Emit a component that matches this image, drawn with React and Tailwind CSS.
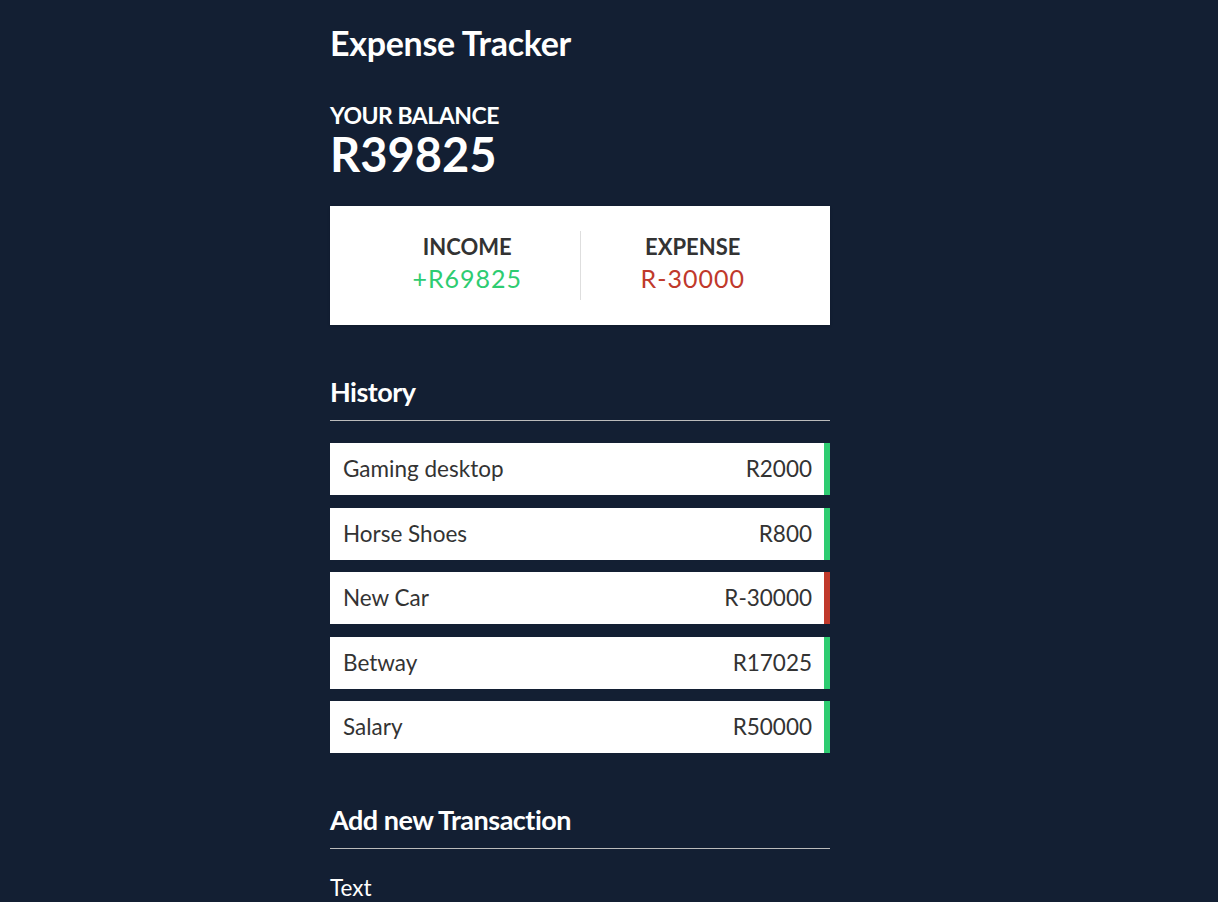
import React from "react";

const TRANSACTIONS = [
  { text: "Gaming desktop", amount: "R2000", plus: true },
  { text: "Horse Shoes", amount: "R800", plus: true },
  { text: "New Car", amount: "R-30000", plus: false },
  { text: "Betway", amount: "R17025", plus: true },
  { text: "Salary", amount: "R50000", plus: true },
];

export default function App() {
  return (
    <div
      className="min-h-screen bg-[#131f33] text-white"
      style={{ fontFamily: "Lato, 'Open Sans', sans-serif" }}
    >
      <div className="w-[500px] ml-[330px] pt-[24px]">
        <h2 className="text-[34px] font-bold tracking-[-0.3px] leading-[38px]">
          Expense Tracker
        </h2>

        <h4 className="mt-[41px] text-[23px] font-bold uppercase tracking-[-0.5px] leading-[24px]">
          Your Balance
        </h4>
        <h1 className="mt-[1px] text-[47px] font-bold leading-[52px]">R39825</h1>

        {/* income / expense box */}
        <div className="mt-[26px] bg-white h-[119px] px-[25px] flex items-center justify-center shadow">
          <div className="flex-1 text-center border-r border-[#dedede] pt-[1px] pb-[6px]">
            <h4 className="text-[22px] font-bold text-[#333] uppercase leading-[30px]">
              Income
            </h4>
            <p className="text-[25px] tracking-[1px] text-[#2ecc71] leading-[32px]">
              +R69825
            </p>
          </div>
          <div className="flex-1 text-center pt-[1px] pb-[6px]">
            <h4 className="text-[22px] font-bold text-[#333] uppercase leading-[30px]">
              Expense
            </h4>
            <p className="text-[25px] tracking-[1px] text-[#c0392b] leading-[32px]">
              R-30000
            </p>
          </div>
        </div>

        <h3 className="mt-[51px] text-[27px] font-bold tracking-[-0.5px] leading-[32px] pb-[12px] border-b border-[#bbb]">
          History
        </h3>
        <ul className="mt-[22px] flex flex-col gap-[12.5px]">
          {TRANSACTIONS.map((t) => (
            <li
              key={t.text}
              className={`bg-white text-[#333] h-[52px] flex items-center justify-between pl-[13px] pr-[12px] text-[22.5px] border-r-[6px] ${
                t.plus ? "border-[#2ecc71]" : "border-[#c0392b]"
              }`}
            >
              <span>{t.text}</span>
              <span>{t.amount}</span>
            </li>
          ))}
        </ul>

        <h3 className="mt-[51px] text-[27px] font-bold tracking-[-0.5px] leading-[32px] pb-[12px] border-b border-[#bbb]">
          Add new Transaction
        </h3>
        <label className="block mt-[24px] text-[22.5px] leading-[30px]">Text</label>
      </div>
    </div>
  );
}
